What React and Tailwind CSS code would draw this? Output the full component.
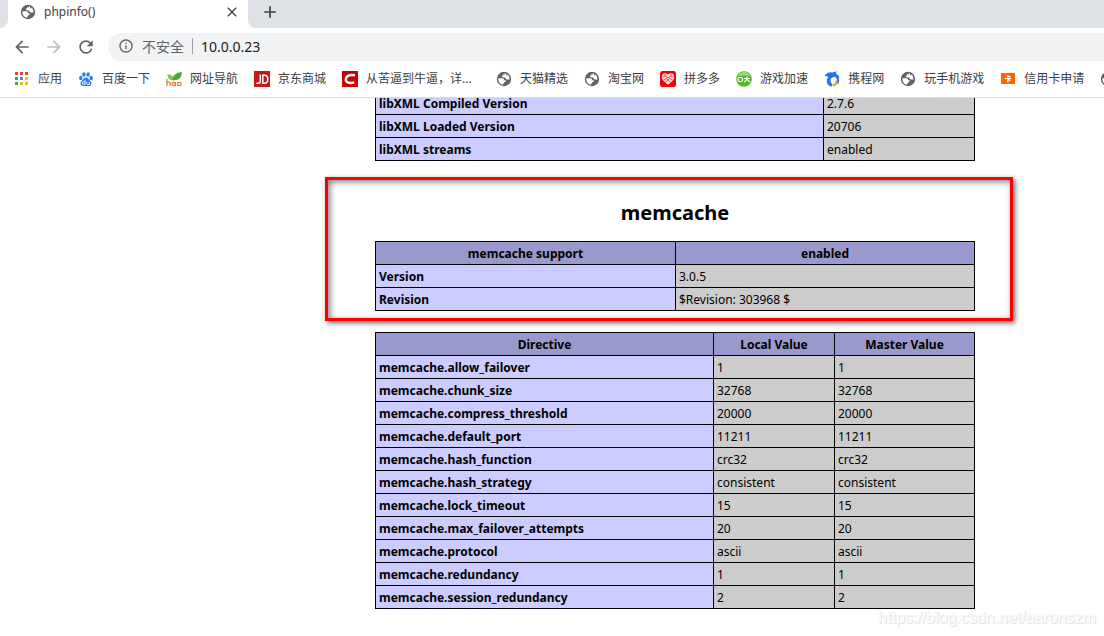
import { MdArrowBack, MdArrowForward, MdRefresh, MdInfoOutline, MdClose, MdAdd } from "react-icons/md";

const Globe = () => (
  <svg viewBox="0 0 16 16" className="size-4 shrink-0">
    <circle cx="8" cy="8" r="7.2" fill="#5f6368" />
    <path
      d="M2.4 7.300H6.200Q8.200 7.400 8.200 9.200H9.800Q10 11 8.200 11.200V12.200H7.200V13.700Q3.200 13 2.400 9.200Z"
      fill="#fff"
    />
    <path
      d="M8.800 2.300L9 3.300H7.200V4.500H5.800Q5.400 6.200 7.200 6.400H9.200Q9.400 8.400 11.200 8.400H13.600Q13.800 5 11.400 3.300V4.300H10V2.500Z"
      fill="#fff"
    />
  </svg>
);

const appColors = [
  "#ea4335", "#ea4335", "#ea4335",
  "#34a853", "#4285f4", "#fbbc05",
  "#34a853", "#fbbc05", "#fbbc05",
];

const AppsIcon = () => (
  <svg viewBox="0 0 16 16" className="size-4 shrink-0">
    {appColors.map((color, i) => (
      <rect key={i} x={1 + (i % 3) * 5} y={1 + Math.floor(i / 3) * 5} width="3" height="3" fill={color} />
    ))}
  </svg>
);

const BaiduIcon = () => (
  <svg viewBox="0 0 16 16" className="size-4 shrink-0" fill="#2f7cf0">
    <ellipse cx="2.8" cy="7" rx="1.7" ry="2.2" />
    <ellipse cx="5.9" cy="3.5" rx="1.7" ry="2.3" />
    <ellipse cx="10.1" cy="3.5" rx="1.7" ry="2.3" />
    <ellipse cx="13.2" cy="7" rx="1.7" ry="2.2" />
    <path d="M8 6.600c2 0 2.600 1.800 3.800 2.900 1.400 1.200 2 2.400 1.600 3.800-.5 1.600-2.200 2-5.400 1.700-3.200.3-4.900-.1-5.400-1.700-.4-1.400.2-2.600 1.600-3.800C5.400 8.400 6 6.600 8 6.600z" />
    <g fill="none" stroke="#fff" strokeWidth=".9">
      <path d="M7 9.200v4.300H5.700a1.300 1.300 0 0 1 0-2.700H7" />
      <path d="M8.800 10.800v1.900q0 .8.8.8h1.700v-2.700" />
    </g>
  </svg>
);

const HaoIcon = () => (
  <svg viewBox="0 0 16 16" className="size-4 shrink-0">
    <path d="M1.500 3.500Q5.500 3.500 6.800 6.200Q9.500 1.300 15.800 1Q16 6 12.500 8.200Q9.500 9.800 6 9.200Q2 8 1.500 3.500z" fill="#4fa83d" />
    <path d="M1.500 3.500Q5.500 3.500 6.800 6.200L6.300 9.200Q2 8 1.500 3.500z" fill="#8cc63e" />
    <g fill="none" stroke="#ee7a30" strokeWidth="1.300">
      <path d="M.9 8v7M.9 12q1.800-2.300 3.200 0v3" />
      <ellipse cx="7.600" cy="12.900" rx="1.700" ry="1.600" />
      <path d="M9.400 11v4" />
      <ellipse cx="13.200" cy="12.900" rx="1.900" ry="1.600" />
    </g>
  </svg>
);

const JdIcon = () => (
  <svg viewBox="0 0 16 16" className="size-4 shrink-0">
    <rect width="16" height="16" fill="#c9151e" />
    <g fill="none" stroke="#fff" strokeWidth="1.500">
      <path d="M6.300 3.500v6.800q0 2-2 2H2.300" />
      <path d="M8.800 4.200v8.100h1.700q3.300 0 3.300-4.050t-3.300-4.050z" />
    </g>
  </svg>
);

const CsdnIcon = () => (
  <svg viewBox="0 0 16 16" className="size-4 shrink-0">
    <rect width="16" height="16" fill="#c80000" />
    <path d="M13 4.300Q4.500 2.900 3.800 8.200Q3.500 13 12.300 11.600" fill="none" stroke="#fff" strokeWidth="2.500" />
  </svg>
);

const PddIcon = () => (
  <svg viewBox="0 0 16 16" className="size-4 shrink-0">
    <rect width="16" height="16" rx="2.500" fill="#f40009" />
    <path d="M8 3.600Q11 1 13.500 3.500Q15.300 6.800 12.500 10L8 13.800L3.500 10Q.7 6.800 2.500 3.500Q5 1 8 3.600z" fill="#ffd9d9" />
    <g fill="none" stroke="#f40009" strokeWidth=".6">
      <path d="M2.500 6.200L5 5l3 2 3-2 2.500 1.200M5 5V3M11 5V3M3.500 9l3-1.500L8 9l1.500-1.500 3 1.500M5.500 11.500L8 9l2.500 2.500" />
    </g>
  </svg>
);

const SpeedIcon = () => (
  <svg viewBox="0 0 16 16" className="size-4 shrink-0">
    <circle cx="8" cy="8" r="7.800" fill="#55b82b" />
    <path d="M1.800 5.500Q3.500 1 8 1t6.200 4.500Q8 3 1.800 5.500z" fill="#9be070" />
    <g fill="none" stroke="#fff" strokeWidth="1.200">
      <rect x="2" y="6.500" width="4.500" height="4" rx="1.500" />
      <path d="M8 7.500h6M11 5.500q0 4-3 5.500M11 7.500q.5 2.500 3 3.500" />
    </g>
  </svg>
);

const CtripIcon = () => (
  <svg viewBox="0 0 16 16" className="size-4 shrink-0">
    <path
      d="M.2 4.300Q2.300 3.600 3.500 2.100Q5.500.8 8.500 1.400L12.300.2L12.100 2.600Q15 4.200 15.300 7.500Q13.500 5.600 11 5.800Q6.500 6.200 6.500 9.500Q6.600 12 8.500 13.200L7.500 15.800Q3 14.200 2.700 10.500Q2.600 7.800 4.500 5.700Q2.500 5.800.2 4.300z"
      fill="#2577e3"
    />
    <path d="M13.200 9.500Q13.800 13.500 11.200 14.900L8.300 15.500L9.300 13Q11.700 12.200 11.500 9.600z" fill="#f5a21b" />
    <path d="M12 3.500Q16.800 8 14.300 13L13.200 12.500Q14 8.500 11 5.500z" fill="#2577e3" />
  </svg>
);

const CardIcon = () => (
  <svg viewBox="0 0 16 16" className="size-4 shrink-0">
    <rect x="1" y="2" width="14" height="11" rx=".8" fill="#f60" />
    <path d="M7.800 4v7.500M4.800 7.500h6.400M8 5.600h2.500M8 8.200l2.300 1.600" fill="none" stroke="#fff" strokeWidth="1.100" />
  </svg>
);

const bookmarks = [
  { label: "应用", Icon: AppsIcon },
  { label: "百度一下", Icon: BaiduIcon },
  { label: "网址导航", Icon: HaoIcon },
  { label: "京东商城", Icon: JdIcon },
  { label: "从苦逼到牛逼，详...", Icon: CsdnIcon, wide: true },
  { label: "天猫精选", Icon: Globe },
  { label: "淘宝网", Icon: Globe },
  { label: "拼多多", Icon: PddIcon },
  { label: "游戏加速", Icon: SpeedIcon },
  { label: "携程网", Icon: CtripIcon },
  { label: "玩手机游戏", Icon: Globe },
  { label: "信用卡申请", Icon: CardIcon },
  { label: "", Icon: Globe },
];

const libxml = [
  ["libXML Compiled Version", "2.7.6"],
  ["libXML Loaded Version", "20706"],
  ["libXML streams", "enabled"],
];

const support = [
  ["Version", "3.0.5"],
  ["Revision", "$Revision: 303968 $"],
];

const directives = [
  ["memcache.allow_failover", "1", "1"],
  ["memcache.chunk_size", "32768", "32768"],
  ["memcache.compress_threshold", "20000", "20000"],
  ["memcache.default_port", "11211", "11211"],
  ["memcache.hash_function", "crc32", "crc32"],
  ["memcache.hash_strategy", "consistent", "consistent"],
  ["memcache.lock_timeout", "15", "15"],
  ["memcache.max_failover_attempts", "20", "20"],
  ["memcache.protocol", "ascii", "ascii"],
  ["memcache.redundancy", "1", "1"],
  ["memcache.session_redundancy", "2", "2"],
];

const InfoTable = ({ widths, head, rows, className }) => (
  <table className={`w-[599px] table-fixed border-collapse text-[12px] leading-4 ${className || ""}`}>
    <colgroup>
      {widths.map((w, i) => (
        <col key={i} className={w} />
      ))}
    </colgroup>
    {head && (
      <thead>
        <tr className="h-[23px] bg-[#9999cc]">
          {head.map((h) => (
            <th key={h} className="border border-black px-[3px] pt-[2px] pb-0 font-bold">{h}</th>
          ))}
        </tr>
      </thead>
    )}
    <tbody>
      {rows.map(([name, ...values]) => (
        <tr key={name} className="h-[23px]">
          <th scope="row" className="border border-black bg-[#ccccff] px-[3px] pt-[2px] pb-0 text-left font-bold">{name}</th>
          {values.map((v, i) => (
            <td key={i} className="border border-black bg-[#cccccc] px-[3px] pt-[2px] pb-0">{v}</td>
          ))}
        </tr>
      ))}
    </tbody>
  </table>
);

const TabStrip = () => (
  <div className="flex h-7 bg-white">
    <div className="w-2 rounded-br-lg bg-[#dee1e6]" />
    <div className="flex w-60 items-center gap-2 pr-2 pb-1 pl-3 text-[12px] text-[#3c4043]">
      <Globe />
      <span className="flex-1">phpinfo()</span>
      <button type="button" aria-label="Close tab" className="text-[#3c4043]">
        <MdClose className="size-4" />
      </button>
    </div>
    <div className="flex flex-1 items-center rounded-bl-lg bg-[#dee1e6] pb-1 pl-3">
      <button type="button" aria-label="New tab" className="text-[#3c4043]">
        <MdAdd className="size-5" />
      </button>
    </div>
  </div>
);

const Toolbar = () => (
  <div className="flex items-center pt-[5px] pl-3 text-[#5f6368]">
    <button type="button" aria-label="Back" className="mr-3">
      <MdArrowBack className="size-5" />
    </button>
    <button type="button" aria-label="Forward" className="mr-3 text-[#bdc1c6]">
      <MdArrowForward className="size-5" />
    </button>
    <button type="button" aria-label="Reload" className="mr-3">
      <MdRefresh className="size-5" />
    </button>
    <div className="flex h-7 flex-1 items-center rounded-l-full bg-[#f1f3f4] pb-[2px] pl-[10px] text-[14px]">
      <MdInfoOutline className="mr-2 size-4" />
      <span>不安全</span>
      <span className="mx-2 h-4 w-px bg-[#9aa0a6]" />
      <input
        aria-label="Address"
        defaultValue="10.0.0.23"
        className="flex-1 bg-transparent text-[#202124] outline-none"
      />
    </div>
  </div>
);

const BookmarkBar = () => (
  <nav className="flex h-[37px] items-center gap-4 overflow-hidden border-b border-[#dadce0] pl-[14px] text-[12px] text-[#3c4043]">
    {bookmarks.map(({ label, Icon, wide }, i) => (
      <a
        key={i}
        href="#"
        aria-label={label || "Bookmark"}
        className={`flex shrink-0 items-center gap-2 whitespace-nowrap ${wide ? "w-[138px]" : ""}`}
      >
        <Icon />
        {label && <span>{label}</span>}
      </a>
    ))}
  </nav>
);

export default function App() {
  return (
    <div className="relative flex h-screen flex-col overflow-hidden bg-white font-['Noto_Sans','Noto_Sans_CJK_SC',sans-serif] text-black">
      <header className="shrink-0">
        <TabStrip />
        <Toolbar />
        <BookmarkBar />
      </header>
      <main className="flex-1 overflow-hidden pl-[325px]">
        <InfoTable className="-mt-[7px] ml-[50px]" widths={["w-[448px]", "w-[151px]"]} rows={libxml} />
        <section className="mt-4 w-[688px] border-[3px] border-[#ff0000] pb-[7px] pl-[47px] shadow-[2px_2px_5px_rgba(0,0,0,0.6),inset_2px_2px_6px_rgba(0,0,0,0.5)]">
          <h2 className="w-[600px] pt-[19px] pb-[14px] text-center text-[20px] leading-7 font-bold">memcache</h2>
          <InfoTable
            widths={["w-[300px]", "w-[299px]"]}
            head={["memcache support", "enabled"]}
            rows={support}
          />
        </section>
        <InfoTable
          className="mt-[11px] ml-[50px]"
          widths={["w-[338px]", "w-[121px]", "w-[140px]"]}
          head={["Directive", "Local Value", "Master Value"]}
          rows={directives}
        />
      </main>
      <p className="absolute right-2 bottom-1 font-['Liberation_Sans',sans-serif] text-[16px] leading-7 text-white [text-shadow:1px_1px_1px_#ddd,0_0_1px_#e4e4e4]">
        https://blog.csdn.net/aaronszm
      </p>
    </div>
  );
}
